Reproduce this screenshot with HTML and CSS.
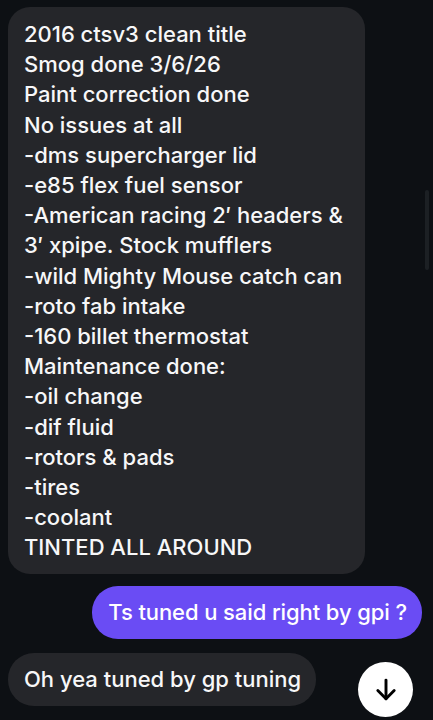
FILE: index.html
```html
<!DOCTYPE html>
<html lang="en">
<head>
    <meta charset="UTF-8">
    <meta name="viewport" content="width=device-width, initial-scale=1.0">
    <title>Chat</title>
    <link rel="stylesheet" href="styles.css">
</head>
<body>

    <div class="thread">
        <div class="row">
            <div class="bubble incoming big">2016 ctsv3 clean title<br>Smog done 3/6/26<br>Paint correction done<br>No issues at all<br>-dms supercharger lid<br>-e85 flex fuel sensor<br>-American racing 2′ headers &amp;<br>3′ xpipe. Stock mufflers<br>-wild Mighty Mouse catch can<br>-roto fab intake<br>-160 billet thermostat<br>Maintenance done:<br>-oil change<br>-dif fluid<br>-rotors &amp; pads<br>-tires<br>-coolant<br>TINTED ALL AROUND</div>
        </div>

        <div class="row outgoing-row">
            <div class="bubble outgoing">Ts tuned u said right by gpi ?</div>
        </div>

        <div class="row">
            <div class="bubble incoming">Oh yea tuned by gp tuning</div>
        </div>
    </div>

    <!-- scroll to bottom button -->
    <button class="scroll-down" aria-label="Scroll to latest">
        <svg width="28" height="28" viewBox="0 0 24 24" fill="none" stroke="#000" stroke-width="2.5" stroke-linecap="round" stroke-linejoin="round">
            <path d="M12 3.5v16"/>
            <path d="M5 12.5l7 7 7-7"/>
        </svg>
    </button>

    <div class="scrollbar"></div>

</body>
</html>
```

FILE: styles.css
```css
/* Page */
body {
    margin: 0;
    background-color: #0d1014;
    font-family: 'Inter', 'Noto Sans', sans-serif;
    color: #f7f7f8;
    height: 720px;
    overflow: hidden;
}

/* Message list */
.thread {
    display: flex;
    flex-direction: column;
    gap: 14px;
    padding: 7px 11px 0 8px;
}

.row {
    display: flex;
}

.outgoing-row {
    justify-content: flex-end;
    margin-top: -2px;
}

.bubble {
    font-size: 22px;
    font-weight: 500;
    letter-spacing: 0;
    line-height: 30.2px;
    padding: 11px 15px 12px 16px;
    border-radius: 26px;
}

.incoming {
    background-color: #25262a;
}

.big {
    width: 325px;
    padding: 12px 16px 11px;
    border-radius: 22px;
}

.outgoing {
    background-color: #6a4cf4;
    color: #ffffff;
    letter-spacing: -0.1px;
}

/* Floating button */
.scroll-down {
    position: absolute;
    left: 358px;
    top: 662px;
    width: 55px;
    height: 55px;
    border: none;
    border-radius: 50%;
    background-color: #ffffff;
    display: flex;
    align-items: center;
    justify-content: center;
    padding: 0;
}

.scrollbar {
    position: absolute;
    left: 425px;
    top: 190px;
    width: 4px;
    height: 80px;
    border-radius: 2px;
    background-color: #1c2024;
}
```
